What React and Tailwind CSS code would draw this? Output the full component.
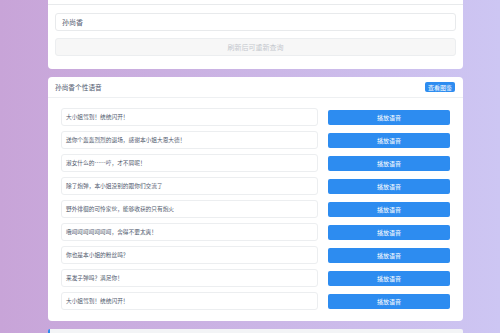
const voices = [
  "大小姐驾到！统统闪开！",
  "送你个轰轰烈烈的退场，感谢本小姐大恩大德！",
  "淑女什么的……哼，才不屑呢！",
  "除了炮弹，本小姐没别的跟你们交流了",
  "野外徘徊的可怜家伙，能够收获的只有炮火",
  "哦呵呵呵呵呵呵呵，舍得不要太爽！",
  "你也是本小姐的粉丝吗？",
  "来发子弹吗？满足你！",
  "大小姐驾到！统统闪开！",
];

const font = { fontFamily: '"Noto Sans CJK SC", "Noto Sans", sans-serif' };

const App = () => {
  return (
    <div
      className="w-[500px] h-[333px] overflow-hidden bg-linear-to-r from-[#c8a4d8] to-[#cdc6f3]"
      style={font}
    >
      <div className="ml-[48px] w-[415px] -mt-[20px] flex flex-col gap-[8px]">
        <div className="bg-white rounded-[4px]">
          <div className="h-[25px] px-[8px] flex items-center border-b border-[#e8eaec] text-[7px] text-[#17233d]">
            英雄语音查询
          </div>
          <div className="px-[7px] pt-[8px] pb-[13px] flex flex-col gap-[7px]">
            <div className="h-[18px] border border-[#e8eaec] rounded-[3px] px-[6px] flex items-center text-[7px] text-[#515a6e]">
              孙尚香
            </div>
            <div className="h-[18px] border border-[#eceef0] bg-[#f7f7f7] rounded-[3px] flex items-center justify-center text-[7px] text-[#c5c8ce]">
              刷新后可重新查询
            </div>
          </div>
        </div>

        <div className="bg-white rounded-[4px]">
          <div className="h-[21px] pl-[7px] pr-[8px] flex items-center justify-between border-b border-[#eef0f2]">
            <span className="text-[6.7px] text-[#515a6e]">孙尚香个性语音</span>
            <span className="w-[30px] h-[10px] rounded-[2px] bg-[#2d8cf0] text-white text-[6px] flex items-center justify-center">
              查看图鉴
            </span>
          </div>
          <div className="px-[13px] pt-[10px] pb-[11px] flex flex-col gap-[5px]">
            {voices.map((v, i) => (
              <div key={i} className="flex items-center gap-[10px]">
                <div className="w-[257px] h-[18px] border border-[#eceef0] rounded-[3px] px-[4px] flex items-center text-[5.7px] text-[#515a6e] whitespace-nowrap">
                  {v}
                </div>
                <button className="flex-1 h-[15px] rounded-[2px] bg-[#2d8cf0] text-white text-[6px] flex items-center justify-center">
                  播放语音
                </button>
              </div>
            ))}
          </div>
        </div>

        <div className="h-[40px] bg-[#f3f4f6] border-l-2 border-[#2d8cf0] rounded-[2px]"></div>
      </div>
    </div>
  );
};

export default App;
